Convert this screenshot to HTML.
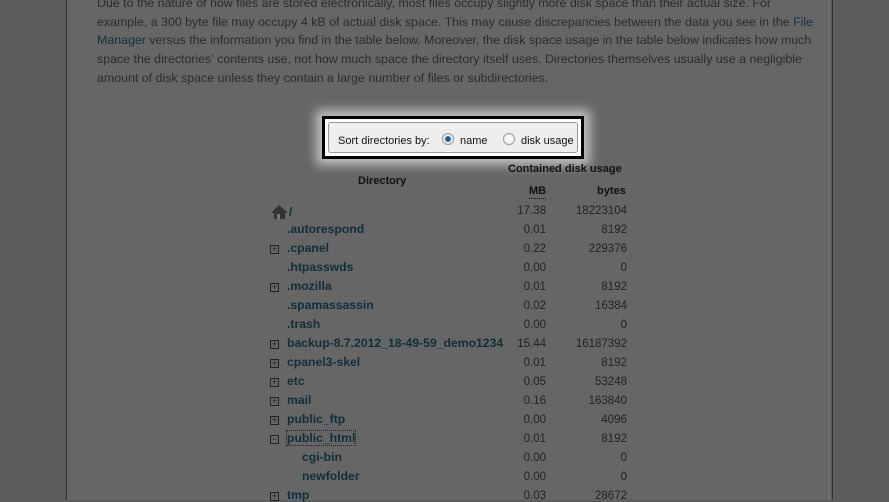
<!DOCTYPE html>
<html style="background:#5c5c5c"><head><meta charset="utf-8"></head>
<body style="margin:0;width:889px;height:500px;overflow:hidden;background:#5c5c5c;position:relative;font-family:'Liberation Sans',Arial,sans-serif">
<div style="position:absolute;left:0;top:0;width:889px;height:500px;background-color:#5c5c5c"></div>
<div style="position:absolute;left:66px;top:0;width:1px;height:500px;background-color:#333"></div>
<div style="position:absolute;left:67px;top:0;width:762px;height:500px;background-color:#666"></div>
<div style="position:absolute;left:829px;top:0;width:1px;height:500px;background-color:#777"></div>
<div style="position:absolute;left:832px;top:0;width:1px;height:500px;background-color:#333"></div>
<div style="position:absolute;left:97px;top:-6px;width:722px;font-family:'Liberation Sans',Arial,sans-serif;font-size:12.4px;line-height:18.7px;color:#2b2b2b">Due to the nature of how files are stored electronically, most files occupy slightly more disk space than their actual size. For example, a 300 byte file may occupy 4 kB of actual disk space. This may cause discrepancies between the data you see in the <span style="color:#0f3040">File Manager</span> versus the information you find in the table below. Moreover, the disk space usage in the table below indicates how much space the directories' contents use, not how much space the directory itself uses. Directories themselves usually use a negligible amount of disk space unless they contain a large number of files or subdirectories.</div>
<div style="position:absolute;left:322px;top:116px;width:256px;height:37px;border:3px solid #000;background-color:#fff;box-shadow:0 0 10px 6px rgba(255,255,255,.6)">
<div style="position:absolute;left:3px;top:3px;right:3px;bottom:3px;background-color:#eee;border:1px solid #999;border-radius:3px;font-family:'Liberation Sans',Arial,sans-serif;font-size:11px;color:#111">
<span style="position:absolute;left:9px;top:12px">Sort directories by:</span>
<div style="position:absolute;left:113px;top:10px;width:10px;height:10px;border-radius:50%;border:1px solid #999;background:radial-gradient(circle,#1a5f8c 35%,#eee 45%)"></div>
<span style="position:absolute;left:131px;top:12px">name</span>
<div style="position:absolute;left:174px;top:10px;width:10px;height:10px;border-radius:50%;border:1px solid #999;background-color:#f4f4f4"></div>
<span style="position:absolute;left:192px;top:12px">disk usage</span>
</div></div>
<div style="position:absolute;left:508px;top:163px;font-family:'Liberation Sans',Arial,sans-serif;font-size:11px;font-weight:bold;color:#111">Contained disk usage</div>
<div style="position:absolute;left:358px;top:175px;font-family:'Liberation Sans',Arial,sans-serif;font-size:11px;font-weight:bold;color:#111">Directory</div>
<div style="position:absolute;left:529px;top:185px;font-family:'Liberation Sans',Arial,sans-serif;font-size:11px;font-weight:bold;color:#111;border-bottom:1px dotted #111;line-height:13px">MB</div>
<div style="position:absolute;left:597px;top:185px;font-family:'Liberation Sans',Arial,sans-serif;font-size:11px;font-weight:bold;color:#111">bytes</div>
<svg style="position:absolute;left:271px;top:204px" width="17" height="15"><path d="M1 8L8 1l8 7v1h-2v6H3V9H1z" fill="#333"/><rect x="6" y="10" width="3" height="5" fill="#777"/></svg>
<span style="position:absolute;left:289px;top:205px;font-family:'Liberation Sans',Arial,sans-serif;font-size:12px;font-weight:bold;color:#0f2f3b">/</span>
<div id="rows"></div>
<script>
var d=[["",1,"17.38","18223104",0],[".autorespond",0,"0.01","8192",0],[".cpanel",1,"0.22","229376",0],[".htpasswds",0,"0.00","0",0],[".mozilla",1,"0.01","8192",0],[".spamassassin",0,"0.02","16384",0],[".trash",0,"0.00","0",0],["backup-8.7.2012_18-49-59_demo1234",1,"15.44","16187392",0],["cpanel3-skel",1,"0.01","8192",0],["etc",1,"0.05","53248",0],["mail",1,"0.16","163840",0],["public_ftp",1,"0.00","4096",0],["public_html",2,"0.01","8192",0],["cgi-bin",0,"0.00","0",1],["newfolder",0,"0.00","0",1],["tmp",1,"0.03","28672",0]];
var F="font-family:'Liberation Sans',Arial,sans-serif;position:absolute;";
var h="";d.forEach(function(r,i){var y=205+i*19;
h+='<div style="'+F+'font-size:11.5px;color:#222;text-align:right;left:490px;width:56px;top:'+y+'px">'+r[2]+'</div><div style="'+F+'font-size:11.5px;color:#222;text-align:right;left:560px;width:67px;top:'+y+'px">'+r[3]+'</div>';
if(i==0)return;
if(r[1])h+='<div style="'+F+'left:270px;width:7px;height:7px;border:1px solid #222;font-size:9px;line-height:7px;text-align:center;color:#222;top:'+(y+2)+'px">'+(r[1]==2?'−':'+')+'</div>';
h+='<div style="'+F+'font-size:12.2px;font-weight:bold;color:#0f2f3b;left:'+(r[4]?302:287)+'px;top:'+(y-2)+'px'+(r[1]==2?';outline:1px dotted #222':'')+'">'+r[0]+'</div>';});
document.getElementById('rows').innerHTML=h;
</script>
</body></html>
